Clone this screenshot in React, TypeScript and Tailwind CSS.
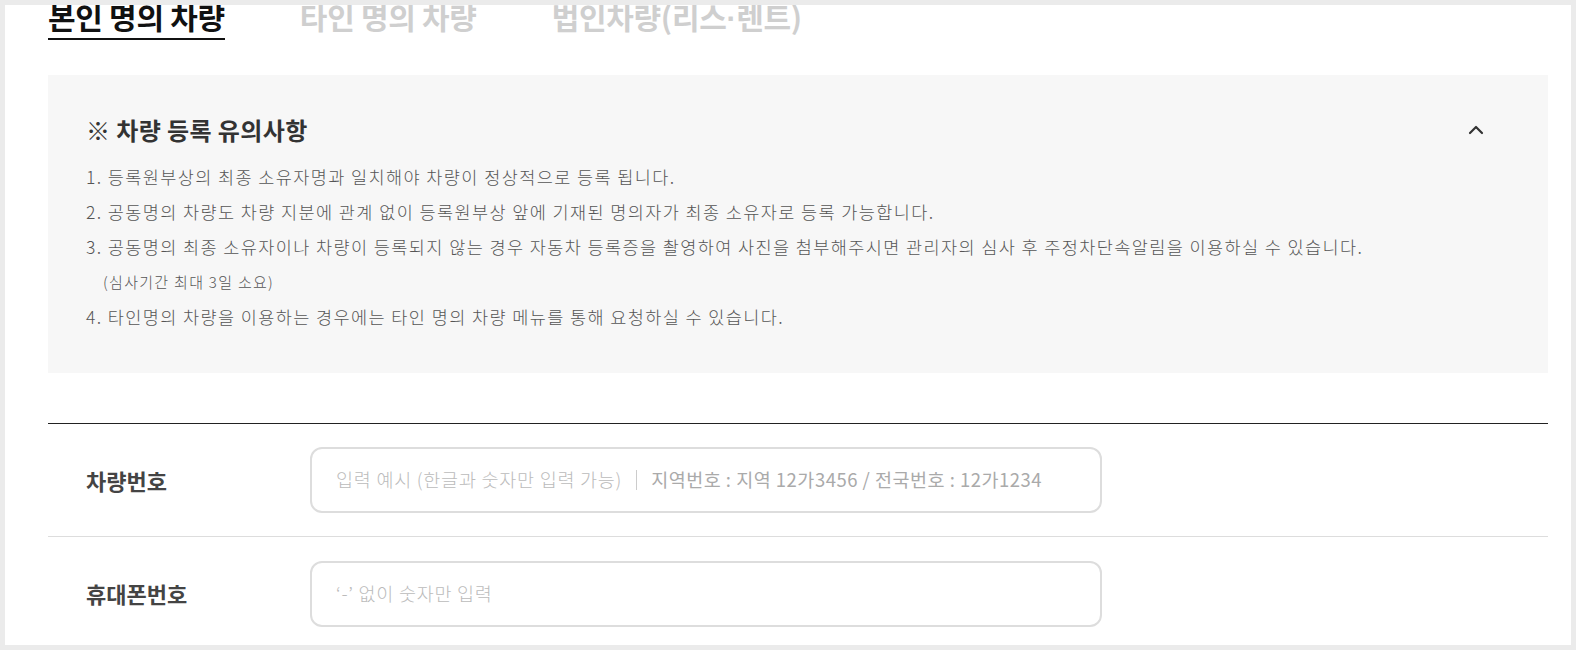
import { useState } from 'react'

const notes = [
  '1. 등록원부상의 최종 소유자명과 일치해야 차량이 정상적으로 등록 됩니다.',
  '2. 공동명의 차량도 차량 지분에 관계 없이 등록원부상 앞에 기재된 명의자가 최종 소유자로 등록 가능합니다.',
  '3. 공동명의 최종 소유자이나 차량이 등록되지 않는 경우 자동차 등록증을 촬영하여 사진을 첨부해주시면 관리자의 심사 후 주정차단속알림을 이용하실 수 있습니다.',
]

export default function App() {
  const [tab, setTab] = useState(0)
  const [open, setOpen] = useState(true)

  const tabs = [
    <>본인 명의 차량</>,
    <>타인 명의 차량</>,
    <>
      법인차량(리스
      <span className="leading-[0]" style={{ fontFamily: '"Liberation Sans", sans-serif' }}>
        ·
      </span>
      렌트)
    </>,
  ]

  return (
    <div
      className="h-[650px] bg-[#ebebeb] p-[5px] overflow-hidden"
      style={{ fontFamily: '"Noto Sans CJK KR", "Noto Sans", sans-serif' }}
    >
      <div className="h-[640px] bg-white overflow-hidden pl-[43px] pr-[23px]">
        <div className="flex items-start gap-[75px] -mt-[4px]">
          {tabs.map((t, i) => (
            <button
              key={i}
              onClick={() => setTab(i)}
              className={`h-[39px] overflow-visible text-[30px] font-bold tracking-[-0.3px] leading-[30px] pb-[7px] border-b-2 ${
                tab === i ? 'text-[#111] border-[#111]' : 'text-[#cfcfcf] border-transparent'
              }`}
            >
              {t}
            </button>
          ))}
        </div>

        <div className="mt-[35px] bg-[#f7f7f7] h-[298px] pl-[38px] pr-[64px] pt-[38px]">
          <div className="flex items-center justify-between">
            <h3 className="text-[24px] font-bold text-[#333] tracking-[0.4px] leading-[34px]">
              ※ 차량 등록 유의사항
            </h3>
            <button onClick={() => setOpen(!open)} aria-label="toggle">
              <svg width="16" height="10" viewBox="0 0 16 10" fill="none">
                <path
                  d={open ? 'M2 8l6-6 6 6' : 'M2 2l6 6 6-6'}
                  stroke="#333"
                  strokeWidth="2.2"
                  strokeLinecap="round"
                  strokeLinejoin="round"
                />
              </svg>
            </button>
          </div>
          {open && (
            <ul className="mt-[12px] text-[17.5px] font-light text-[#555] tracking-[1.4px] leading-[35px]">
              {notes.map((n) => (
                <li key={n}>{n}</li>
              ))}
              <li className="pl-[17px] text-[15px] tracking-[1.3px]">(심사기간 최대 3일 소요)</li>
              <li>4. 타인명의 차량을 이용하는 경우에는 타인 명의 차량 메뉴를 통해 요청하실 수 있습니다.</li>
            </ul>
          )}
        </div>

        <div className="mt-[50px] border-t border-[#222]">
          <div className="flex items-center h-[113px] border-b border-[#ddd]">
            <div className="w-[262px] pl-[38px] text-[22px] font-bold text-[#444]">차량번호</div>
            <div className="w-[792px] h-[66px] border-2 border-[#ddd] rounded-[12px] flex items-center pl-[24px] text-[18.5px]">
              <span className="font-light text-[#bbb] tracking-[0.75px]">입력 예시 (한글과 숫자만 입력 가능)</span>
              <span className="w-px h-[20px] bg-[#ccc] mx-[14px]" />
              <span className="text-[#aaa] tracking-[0.5px]">지역번호 : 지역 12가3456 / 전국번호 : 12가1234</span>
            </div>
          </div>
          <div className="flex items-center h-[113px]">
            <div className="w-[262px] pl-[38px] text-[22px] font-bold text-[#444]">휴대폰번호</div>
            <div className="w-[792px] h-[66px] border-2 border-[#ddd] rounded-[12px] flex items-center pl-[24px] text-[18.5px]">
              <span className="font-light text-[#bbb] tracking-[0.75px]">‘-’ 없이 숫자만 입력</span>
            </div>
          </div>
        </div>
      </div>
    </div>
  )
}
